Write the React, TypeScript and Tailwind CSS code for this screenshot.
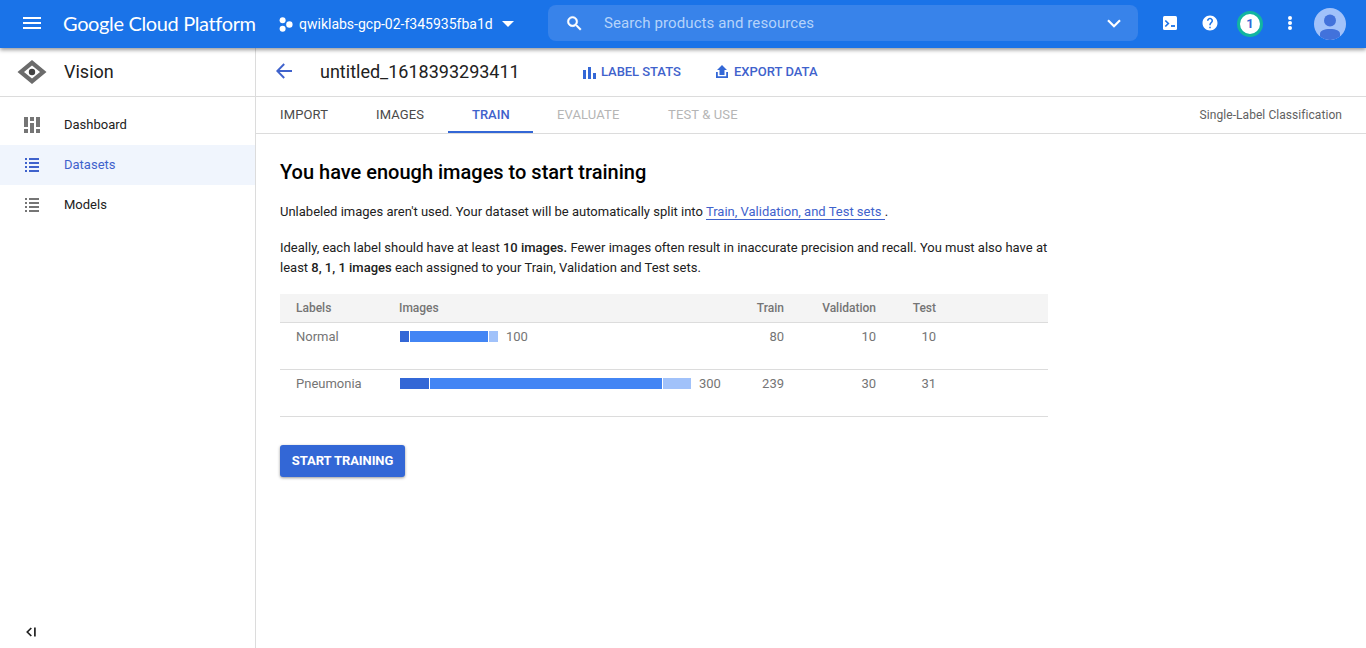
import type { ReactNode } from 'react';

const Icon = ({ className, children }: { className: string; children: ReactNode }) => (
  <svg viewBox="0 0 24 24" fill="currentColor" className={`shrink-0 ${className}`}>
    {children}
  </svg>
);

const ListIcon = () => (
  <svg viewBox="0 0 14 14" fill="currentColor" className="ml-[25px] h-3.5 w-3.5 shrink-0" shapeRendering="crispEdges">
    <path d="M0 0h2v2H0zM4 0h10v2H4zM0 4h2v2H0zM4 4h10v2H4zM0 8h2v2H0zM4 8h10v2H4zM0 12h2v2H0zM4 12h10v2H4z" />
  </svg>
);

const rows = [
  { label: 'Normal', total: 100, bars: [9, 78, 9], train: 80, validation: 10, test: 10 },
  { label: 'Pneumonia', total: 300, bars: [29, 232, 28], train: 239, validation: 30, test: 31 },
];

function Header() {
  return (
    <header className="relative z-10 flex h-12 shrink-0 items-center bg-[#1a73e8] text-white shadow-[0_2px_4px_rgba(0,0,0,0.4)]">
      <svg viewBox="0 0 18 12" fill="currentColor" className="ml-[23px] h-3 w-[18px] shrink-0 -translate-y-px">
        <path d="M0 0h18v2H0zM0 5h18v2H0zM0 10h18v2H0z" />
      </svg>
      <div className="ml-[22px] w-[215px] -translate-y-px whitespace-nowrap font-['Lato'] text-[20px] leading-6 tracking-[-0.36px]">
        Google Cloud Platform
      </div>
      <svg viewBox="0 0 14 15" fill="currentColor" className="ml-px h-[15px] w-3.5 shrink-0">
        <circle cx="3.6" cy="3.2" r="3" />
        <circle cx="3.6" cy="11.8" r="3" />
        <circle cx="10.4" cy="7.5" r="3.2" />
      </svg>
      <div className="ml-[6px] w-[203px] whitespace-nowrap text-[14px] leading-5">qwiklabs-gcp-02-f345935fba1d</div>
      <svg viewBox="0 0 12 6" fill="currentColor" className="h-1.5 w-3 shrink-0">
        <path d="M0 0h12L6 6z" />
      </svg>
      <div className="ml-[34px] flex h-9 w-[590px] -translate-y-px items-center rounded-lg bg-[#3883ea]">
        <Icon className="ml-[17px] h-[19px] w-[19px]">
          <path d="M15.5 14h-.79l-.28-.27A6.471 6.471 0 0 0 16 9.5 6.5 6.5 0 1 0 9.5 16c1.61 0 3.09-.59 4.23-1.57l.27.28v.79l5 4.99L20.49 19l-4.99-5zm-6 0C7.01 14 5 11.99 5 9.5S7.01 5 9.5 5 14 7.01 14 9.5 11.99 14 9.5 14z" stroke="currentColor" strokeWidth=".7" />
        </Icon>
        <span className="ml-5 text-[15px] leading-5 tracking-[0.1px] text-[#b5d3fa]">Search products and resources</span>
        <svg viewBox="0 0 14 9" fill="none" stroke="currentColor" strokeWidth="2.2" className="ml-auto mr-[17px] h-[9px] w-3.5">
          <path d="M1 1.2l6 6 6-6" />
        </svg>
      </div>
      <svg viewBox="0 0 14 14" className="ml-[25px] h-3.5 w-3.5 shrink-0 -translate-y-px">
        <rect width="14" height="14" rx="1.5" fill="currentColor" />
        <path d="M2.3 4.5l3 3-3 3" fill="none" stroke="#1a73e8" strokeWidth="1.7" />
        <path d="M8 10h4" stroke="#1a73e8" strokeWidth="1.8" />
      </svg>
      <Icon className="ml-[24px] h-[18px] w-[18px] -translate-y-px">
        <path d="M12 2C6.48 2 2 6.48 2 12s4.48 10 10 10 10-4.48 10-10S17.52 2 12 2zm1 17h-2v-2h2v2zm2.07-7.75l-.9.92C13.45 12.9 13 13.5 13 15h-2v-.5c0-1.1.45-2.1 1.17-2.83l1.24-1.26c.37-.36.59-.86.59-1.41 0-1.1-.9-2-2-2s-2 .9-2 2H8c0-2.21 1.79-4 4-4s4 1.79 4 4c0 .88-.36 1.68-.93 2.25z" />
      </Icon>
      <div className="ml-[18px] flex h-[26px] w-[26px] shrink-0 items-center justify-center rounded-full border-[3px] border-[#12b5a0] bg-white text-[13px] font-bold text-[#3367d6]">
        1
      </div>
      <svg viewBox="0 0 4 14" fill="currentColor" className="ml-[25px] h-3.5 w-1 shrink-0 -translate-y-px">
        <circle cx="2" cy="2" r="2" />
        <circle cx="2" cy="7" r="2" />
        <circle cx="2" cy="12" r="2" />
      </svg>
      <svg viewBox="0 0 32 32" className="ml-[22px] h-8 w-8 shrink-0">
        <circle cx="16" cy="16" r="16" fill="#a1c2fa" />
        <circle cx="16" cy="12.5" r="6" fill="#4272db" />
        <path d="M6 28.5V26c0-3.5 4-5 10-5s10 1.5 10 5v2.5A16 16 0 0 1 6 28.5z" fill="#4272db" />
      </svg>
    </header>
  );
}

function Sidebar() {
  return (
    <aside className="flex w-64 shrink-0 flex-col border-r border-[#dcdcdc] text-[13px]">
      <div className="flex h-[49px] shrink-0 items-center border-b border-[#dcdcdc]">
        <svg viewBox="0 0 30 24" className="ml-[17px] h-6 w-[30px] shrink-0">
          <path d="M0.5 12L15 0l14.5 12L15 24zM7 12l8 6.5 8-6.5-8-6.500z" fill="#6b6b6b" fillRule="evenodd" />
          <circle cx="15" cy="12" r="3.2" fill="#424242" />
        </svg>
        <h1 className="ml-[17px] text-[18px] leading-6 text-[#212121]">Vision</h1>
      </div>
      <nav className="flex flex-col pt-2 text-[#212121]">
        <a className="flex h-10 items-center">
          <svg viewBox="0 0 16 16" fill="#757575" className="ml-6 h-4 w-4 shrink-0" shapeRendering="crispEdges">
            <path d="M0 0h4v10H0zM0 12h4v4H0zM6 0h4v4H6zM6 6h4v10H6zM12 0h4v10h-4zM12 12h4v4h-4z" />
          </svg>
          <span className="ml-6">Dashboard</span>
        </a>
        <a className="flex h-10 items-center bg-[#f0f5fd] text-[#3f62cc]">
          <ListIcon />
          <span className="ml-[25px]">Datasets</span>
        </a>
        <a className="flex h-10 items-center">
          <span className="flex text-[#757575]"><ListIcon /></span>
          <span className="ml-[25px]">Models</span>
        </a>
      </nav>
      <svg viewBox="0 0 10 10" className="mb-[11px] ml-[26px] mt-auto h-2.5 w-2.5 shrink-0" fill="none" stroke="#212121" strokeWidth="1.7">
        <path d="M5.3 1L1.3 5l4 4M8.9 .5v9" />
      </svg>
    </aside>
  );
}

function TitleBar() {
  return (
    <div className="flex h-[49px] shrink-0 items-center border-b border-[#dcdcdc] text-[#3f62cc]">
      <svg viewBox="0 0 16 16" fill="none" stroke="currentColor" strokeWidth="1.9" className="ml-5 h-4 w-4 shrink-0 -translate-y-px">
        <path d="M16 8H1.5M8.2 1L1.3 8l6.9 7" />
      </svg>
      <h2 className="ml-7 w-[262px] text-[18px] leading-6 text-[#212121]">untitled_1618393293411</h2>
      <svg viewBox="0 0 13 12" fill="#3367d6" className="ml-px h-3 w-[13px] shrink-0 translate-y-px">
        <path d="M0 3h3v9H0zM5 0h3v12H5zM10 6h3v6h-3z" />
      </svg>
      <span className="ml-[5px] w-[115px] whitespace-nowrap text-[13px] font-medium tracking-[-0.05px]">LABEL STATS</span>
      <svg viewBox="0 0 12 13" fill="#3367d6" className="h-[13px] w-3 shrink-0 -translate-y-px">
        <path d="M6 0l5 5H8.5v5h-5V5H1zM0 7h1.8v4.2h8.4V7H12v6H0z" />
      </svg>
      <span className="ml-[6px] whitespace-nowrap text-[13px] font-medium">EXPORT DATA</span>
    </div>
  );
}

function Tabs() {
  return (
    <div className="flex h-[37px] shrink-0 border-b border-[#dcdcdc] text-[13px] leading-9 tracking-[0.12px] text-[#4a4a4a]">
      <div className="w-24 pl-6">IMPORT</div>
      <div className="w-24 pl-6">IMAGES</div>
      <div className="w-[85px] border-b-2 border-[#3367d6] pl-6 font-medium tracking-normal text-[#3f62cc]">TRAIN</div>
      <div className="w-[111px] pl-6 text-[#b5b5b5]">EVALUATE</div>
      <div className="w-[117px] whitespace-nowrap pl-6 text-[#b5b5b5]">TEST &amp; USE</div>
      <div className="ml-auto pr-6 text-[12px] tracking-[0.06px] text-[#616161]">Single-Label Classification</div>
    </div>
  );
}

function LabelTable() {
  return (
    <div className="mt-4 w-[768px] text-[#757575]">
      <div className="flex h-[29px] items-center border-b border-[#dcdcdc] bg-[#f4f4f4] text-[12px] font-medium">
        <div className="w-[119px] pl-4">Labels</div>
        <div className="w-[325px]">Images</div>
        <div className="w-[60px] text-right">Train</div>
        <div className="w-[92px] text-right">Validation</div>
        <div className="w-[60px] text-right">Test</div>
      </div>
      {rows.map((row) => (
        <div key={row.label} className="flex h-[47px] border-b border-[#dcdcdc] pt-1 text-[13px] leading-5">
          <div className="w-[120px] pl-4">{row.label}</div>
          <div className="flex w-[324px] items-start self-start">
            <div className="mt-1 flex h-[11px] gap-px">
              <div className="bg-[#3367d6]" style={{ width: row.bars[0] }} />
              <div className="bg-[#4285f4]" style={{ width: row.bars[1] }} />
              <div className="bg-[#a1c2fa]" style={{ width: row.bars[2] }} />
            </div>
            <span className="ml-2">{row.total}</span>
          </div>
          <div className="w-[60px] text-right">{row.train}</div>
          <div className="w-[92px] text-right">{row.validation}</div>
          <div className="w-[60px] text-right">{row.test}</div>
        </div>
      ))}
    </div>
  );
}

export default function App() {
  return (
    <div className="flex h-[648px] w-[1366px] flex-col overflow-hidden bg-white font-['Roboto',sans-serif]">
      <Header />
      <div className="flex min-h-0 flex-1">
        <Sidebar />
        <div className="flex min-w-0 flex-1 flex-col">
          <TitleBar />
          <Tabs />
          <main className="pl-6 pt-[26px] text-[13px] leading-5 text-[#212121]">
            <h3 className="text-[20px] font-medium leading-6 text-black">You have enough images to start training</h3>
            <p className="mt-[18px]">
              Unlabeled images aren't used. Your dataset will be automatically split into{' '}
              <a className="border-b border-[#3f62cc] text-[#3f62cc]">Train, Validation, and Test sets </a>.
            </p>
            <p className="mt-4 whitespace-nowrap">
              Ideally, each label should have at least <b className="font-medium">10 images.</b> Fewer images often result in inaccurate precision and recall. You must also have at
              <br />
              least <b className="font-medium">8, 1, 1 images</b> each assigned to your Train, Validation and Test sets.
            </p>
            <LabelTable />
            <button className="mt-7 flex h-8 w-[125px] items-center justify-center whitespace-nowrap rounded-[3px] bg-[#3367d6] text-[13px] font-bold tracking-[-0.08px] text-white shadow-[0_1px_3px_rgba(0,0,0,0.4)]">
              START TRAINING
            </button>
          </main>
        </div>
      </div>
    </div>
  );
}
